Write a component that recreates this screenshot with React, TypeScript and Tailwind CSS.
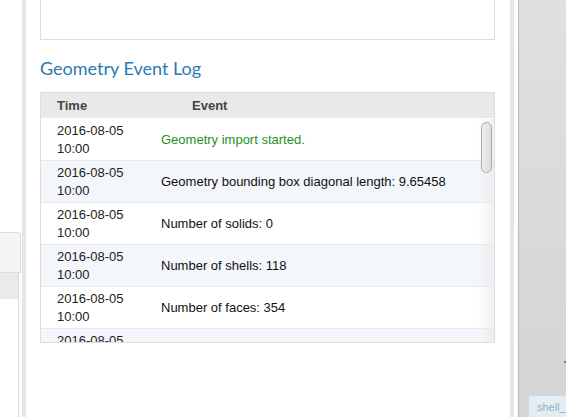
const ROWS = [
  { time: '2016-08-05 10:00', text: 'Geometry import started.', ok: true },
  { time: '2016-08-05 10:00', text: 'Geometry bounding box diagonal length: 9.65458' },
  { time: '2016-08-05 10:00', text: 'Number of solids: 0' },
  { time: '2016-08-05 10:00', text: 'Number of shells: 118' },
  { time: '2016-08-05 10:00', text: 'Number of faces: 354' },
  { time: '2016-08-05 10:00', text: 'Number of edges: 1062' },
];

function EventRow({ time, text, ok, alt }: { time: string; text: string; ok?: boolean; alt: boolean }) {
  const [date, hour] = time.split(' ');
  return (
    <div className={`flex h-[42px] shrink-0 items-center border-b border-[#e6e8eb] ${alt ? 'bg-[#f3f6fa]' : 'bg-white'}`}>
      <div className="w-[120px] shrink-0 pl-[16px] pt-[1px] leading-[18px] text-[#222]">
        <div>{date}</div>
        <div>{hour}</div>
      </div>
      <div className={ok ? 'text-[#1e911e]' : 'text-[#111]'}>{text}</div>
    </div>
  );
}

export default function App() {
  return (
    <div className="flex h-[417px] w-[566px] overflow-hidden bg-white text-[13px]" style={{ fontFamily: '"Liberation Sans", Arial, sans-serif' }}>
      {/* left panel */}
      <div className="flex w-[22px] shrink-0 flex-col bg-white pt-[232px]">
        <div className="h-[41px] w-[21px] rounded-tr-[4px] border-r border-t border-b border-[#dcdcdc] bg-[#f5f5f5]" />
        <div className="flex w-[19px] flex-1 flex-col border-r border-[#dcdcdc]">
          <div className="h-[26px] bg-[#ebebeb]" />
        </div>
      </div>
      <div className="w-[4px] shrink-0 bg-[#e6e6e6]" />

      {/* main panel */}
      <div className="flex w-[484px] shrink-0 flex-col pl-[14px] pr-[15px]">
        <div className="h-[40px] shrink-0 border-x border-b border-[#dddddd]" />
        <h2 className="mt-[16px] h-[36px] text-[18px] leading-[24px] text-[#2a7ab2]" style={{ fontFamily: 'Lato, "Open Sans", sans-serif' }}>
          Geometry Event Log
        </h2>
        <div className="flex h-[251px] flex-col border border-[#dddddd]">
          <div className="flex h-[26px] shrink-0 items-center border-b border-white bg-[#e9e9e9] font-bold text-[#444]">
            <div className="w-[151px] pl-[16px]">Time</div>
            <div>Event</div>
          </div>
          <div className="relative flex flex-1 flex-col overflow-hidden">
            {ROWS.map((r, i) => (
              <EventRow key={i} time={r.time} text={r.text} ok={r.ok} alt={i % 2 === 1} />
            ))}
            <div className="absolute right-0 top-0 h-full w-[16px] bg-gradient-to-r from-white/0 to-[#e9e9e9]/70" />
            <div className="absolute right-[2px] top-[3px] h-[51px] w-[11px] rounded-full border border-[#a9a9a9] bg-gradient-to-r from-[#eeeeee] to-[#dcdcdc]" />
          </div>
        </div>
      </div>

      <div className="w-[4px] shrink-0 bg-[#e6e6e6]" />
      <div className="w-[4px] shrink-0 bg-white" />
      <div className="w-[1px] shrink-0 bg-[#b8b8b8]" />

      {/* right panel */}
      <div className="relative flex flex-1 flex-col justify-end bg-gradient-to-b from-[#e0e0e0] to-[#d4d4d4]">
        <div className="absolute right-0 top-[361px] h-[2px] w-[2px] bg-[#9a6a6a]" />
        <div className="ml-[9px] h-[22px] rounded-tl-[4px] border-l border-t border-[#c9dde6] bg-[#e6edf1] pl-[8px] pt-[5px] text-[11px] leading-[13px] text-[#8fb0c6]">
          shell_
        </div>
      </div>
    </div>
  );
}
